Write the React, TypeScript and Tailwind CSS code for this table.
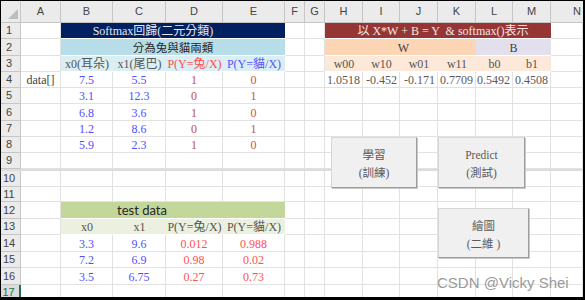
import React from "react";

const COLS =
  "grid grid-cols-[20px_40px_52px_53px_57px_62px_20px_20px_38px_37px_38px_38px_37px_38px_1fr]";
const G = "border-r border-b border-[#e2e2e2]";
const F = "border-b border-white";

const BLUE = "text-[#4f4fff]";
const RED = "text-[#c8504d]";
const RED2 = "text-[#ff5252]";
const GRAY = "text-[#555555]";

type Cell = { t?: string; c?: string };

const LETTERS = ["A", "B", "C", "D", "E", "F", "G", "H", "I", "J", "K", "L", "M", "N"];

const b: Cell = {};
const blanks = (n: number): Cell[] => Array.from({ length: n }, () => ({}));

function HeaderRow() {
  return (
    <div className={`${COLS} h-[22px]`}>
      <div className="relative bg-[#ebebeb] border-r border-b border-[#c6c6c6]">
        <svg className="absolute left-0 top-0" width="20" height="22" viewBox="0 0 20 22">
          <polygon points="17,8 17,18 7,18" fill="#bdbdbd" />
        </svg>
      </div>
      {LETTERS.map((l, i) =>
        i === 13 ? (
          <div
            key={l}
            className="flex items-center pl-[22px] bg-[#ebebeb] border-b border-[#c6c6c6] text-[11px] text-[#444] font-['Liberation_Sans',sans-serif]"
          >
            {l}
          </div>
        ) : (
          <div
            key={l}
            className="flex items-center justify-center bg-[#ebebeb] border-r border-b border-[#c6c6c6] text-[11px] text-[#444] font-['Liberation_Sans',sans-serif]"
          >
            {l}
          </div>
        )
      )}
    </div>
  );
}

function RowHeader({ n, active }: { n: number; active?: boolean }) {
  return active ? (
    <div className="flex items-center justify-center pr-[3px] bg-[#dcdcdc] border-b border-[#c6c6c6] border-r-2 border-r-[#217346] text-[11px] text-[#217346] font-['Liberation_Sans',sans-serif]">
      {n}
    </div>
  ) : (
    <div className="flex items-center justify-center pr-[3px] bg-[#ebebeb] border-r border-b border-[#c6c6c6] text-[11px] text-[#444] font-['Liberation_Sans',sans-serif]">
      {n}
    </div>
  );
}

function Row({ n, h, cells, active }: { n: number; h: string; cells: Cell[]; active?: boolean }) {
  return (
    <div className={`${COLS} ${h}`}>
      <RowHeader n={n} active={active} />
      {cells.map((c, i) => (
        <div key={i} className={`flex items-center overflow-hidden whitespace-pre pt-[1px] ${c.c ?? G}`}>
          {c.t}
        </div>
      ))}
    </div>
  );
}

const dc = (t: string, color: string): Cell => ({ t, c: `${G} justify-center ${color}` });
const wv = (t: string): Cell => ({ t, c: `${G} justify-end pr-[2px] text-[#5a5a5a]` });

const h3 = (t: string, color: string): Cell => ({
  t,
  c: `${F} justify-center bg-[#daeef3] ${color}`,
});
const pe = (t: string): Cell => ({ t, c: `${F} justify-center bg-[#fde9d9] ${GRAY}` });
const tg = (t: string): Cell => ({ t, c: `${F} justify-center bg-[#ebf1de] ${GRAY}` });

const dataRows: [string, string, string, string][] = [
  ["3.1", "12.3", "0", "1"],
  ["6.8", "3.6", "1", "0"],
  ["1.2", "8.6", "0", "1"],
  ["5.9", "2.3", "1", "0"],
];

const testRows: [string, string, string, string][] = [
  ["3.3", "9.6", "0.012", "0.988"],
  ["7.2", "6.9", "0.98", "0.02"],
  ["3.5", "6.75", "0.27", "0.73"],
];

const dataHeights = ["h-[16px]", "h-[17px]", "h-[16px]", "h-[16px]"];
const testHeights = ["h-[17px]", "h-[16px]", "h-[17px]"];

function Button({ cls, l1, l2 }: { cls: string; l1: string; l2: string }) {
  return (
    <div
      className={`absolute ${cls} flex flex-col items-center justify-center bg-[#f0f0f0] border border-[#d6d6d6] border-r-[#9e9e9e] border-b-[#9e9e9e] shadow-[1px_1px_0_#c8c8c8] text-[11.5px] leading-[18px] text-[#5a5a5a] pt-[3px]`}
    >
      <span>{l1}</span>
      <span className="whitespace-pre">{l2}</span>
    </div>
  );
}

export default function App() {
  return (
    <div className="relative w-[585px] h-[300px] overflow-hidden bg-white border-t border-l border-black border-r-2 border-b-[3px] text-[12px] leading-none font-['Liberation_Serif','Noto_Sans_CJK_TC',serif]">
      <HeaderRow />
      <Row
        n={1}
        h="h-[16px]"
        cells={[
          b,
          {
            t: "Softmax回歸(二元分類)",
            c: `col-span-4 justify-center pr-[40px] bg-[#002060] text-[#e6e8f0] ${F}`,
          },
          b,
          b,
          {
            t: "以 X*W + B = Y  & softmax()表示",
            c: `col-span-6 justify-center pl-[10px] bg-[#963634] text-[#f3e6e6] ${F}`,
          },
          b,
        ]}
      />
      <Row
        n={2}
        h="h-[17px]"
        cells={[
          b,
          {
            t: "分為兔與貓兩類",
            c: `col-span-4 justify-center bg-[#b7dee8] text-[#262626] ${F} text-[11.5px] font-['Noto_Sans_CJK_TC',sans-serif]`,
          },
          b,
          b,
          { t: "W", c: `col-span-4 justify-center pl-[6px] bg-[#fcd5b4] text-[#404040] ${F}` },
          { t: "B", c: `col-span-2 justify-center bg-[#e4dfec] text-[#404040] ${F}` },
          b,
        ]}
      />
      <Row
        n={3}
        h="h-[16px]"
        cells={[
          b,
          h3("x0(耳朵)", GRAY),
          h3("x1(尾巴)", GRAY),
          h3("P(Y=兔/X)", "text-[#ff4d4d]"),
          h3("P(Y=貓/X)", "text-[#5555ff]"),
          b,
          b,
          pe("w00"),
          pe("w10"),
          pe("w01"),
          pe("w11"),
          pe("b0"),
          pe("b1"),
          b,
        ]}
      />
      <Row
        n={4}
        h="h-[16px]"
        cells={[
          { t: "data[]", c: `${G} justify-center text-[#404040]` },
          dc("7.5", BLUE),
          dc("5.5", BLUE),
          dc("1", RED),
          dc("0", RED),
          b,
          b,
          wv("1.0518"),
          wv("-0.452"),
          wv("-0.171"),
          wv("0.7709"),
          wv("0.5492"),
          wv("0.4508"),
          b,
        ]}
      />
      {dataRows.map((r, i) => (
        <Row
          key={i}
          n={5 + i}
          h={dataHeights[i]}
          cells={[b, dc(r[0], BLUE), dc(r[1], BLUE), dc(r[2], RED), dc(r[3], RED), ...blanks(9)]}
        />
      ))}
      <Row n={9} h="h-[16px]" cells={blanks(14)} />
      <div className="h-[2px] bg-[#dcdcdc]" />
      <Row n={10} h="h-[16px]" cells={blanks(14)} />
      <Row n={11} h="h-[15px]" cells={blanks(14)} />
      <Row
        n={12}
        h="h-[17px]"
        cells={[
          b,
          {
            t: "test data",
            c: `col-span-3 justify-center bg-[#c4d79b] ${F} text-[#262626] text-[13px] font-['Lato','Noto_Sans_CJK_TC',sans-serif]`,
          },
          { c: `bg-[#c4d79b] ${F}` },
          ...blanks(9),
        ]}
      />
      <Row
        n={13}
        h="h-[16px]"
        cells={[b, tg("x0"), tg("x1"), tg("P(Y=兔/X)"), tg("P(Y=貓/X)"), ...blanks(9)]}
      />
      {testRows.map((r, i) => (
        <Row
          key={i}
          n={14 + i}
          h={testHeights[i]}
          cells={[b, dc(r[0], BLUE), dc(r[1], BLUE), dc(r[2], RED2), dc(r[3], RED2), ...blanks(9)]}
        />
      ))}
      <Row n={17} h="h-[16px]" cells={blanks(14)} active />

      <Button cls="left-[330px] top-[136px] w-[86px] h-[51px]" l1="學習" l2="(訓練)" />
      <Button cls="left-[437px] top-[136px] w-[87px] h-[51px]" l1="Predict" l2="(測試)" />
      <Button cls="left-[437px] top-[207px] w-[91px] h-[50px]" l1="繪圖" l2="(二維 )" />

      <div className="absolute left-[436px] top-[274px] text-[15px] leading-none text-[#9a9a9a] font-['Liberation_Sans',sans-serif] whitespace-pre">
        CSDN @Vicky Shei
      </div>
    </div>
  );
}
